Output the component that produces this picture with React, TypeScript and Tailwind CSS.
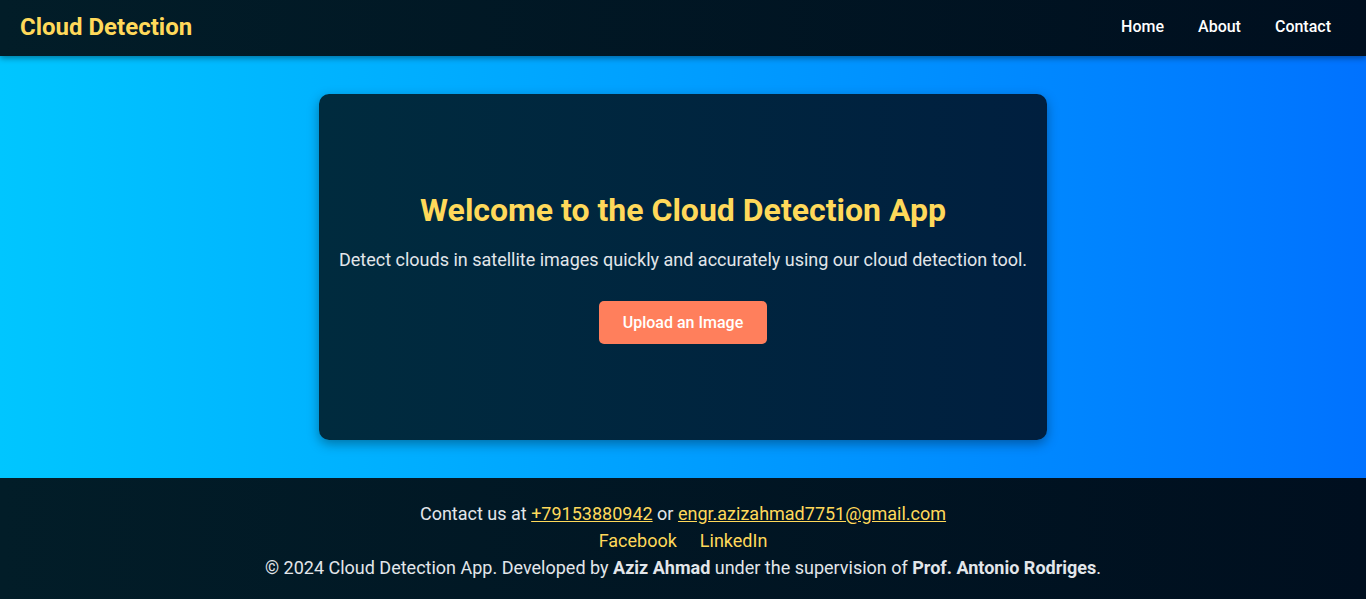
export default function App() {
  return (
    <div className="min-h-screen flex flex-col font-['Roboto',sans-serif]">
      <header className="h-[56px] flex items-center justify-between pl-[20px] pr-[35px] pb-[2px] bg-gradient-to-r from-[#021d28] to-[#000f1f] shadow-[0_2px_6px_rgba(0,0,0,0.4)] z-10">
        <h1 className="text-[24px] font-bold text-[#ffd95a]">Cloud Detection</h1>
        <nav className="flex gap-[34px] text-[16px] font-medium text-white">
          <a href="#">Home</a>
          <a href="#">About</a>
          <a href="#">Contact</a>
        </nav>
      </header>

      <main className="h-[422px] flex items-center justify-center bg-gradient-to-r from-[#00c6ff] to-[#0072ff]">
        <section className="w-[728px] h-[346px] rounded-[10px] px-[10px] flex flex-col items-center justify-center text-center bg-gradient-to-r from-[#002b3e] to-[#001f3f] shadow-[0_4px_12px_rgba(0,0,0,0.35)]">
          <h2 className="text-[32px] leading-[40px] font-bold text-[#ffd95a]">
            Welcome to the Cloud Detection App
          </h2>
          <p className="mt-[16px] text-[18px] leading-[27px] text-[#e2e6ea]">
            Detect clouds in satellite images quickly and accurately using our cloud detection tool.
          </p>
          <button className="mt-[28px] w-[168px] h-[43px] rounded-[5px] bg-[#ff7f5c] text-white text-[16px] font-medium">
            Upload an Image
          </button>
        </section>
      </main>

      <footer className="flex-1 min-h-[121px] pt-[4px] flex flex-col items-center justify-center text-[18px] leading-[27px] text-[#e2e6ea] bg-gradient-to-r from-[#021d28] to-[#000f1f]">
        <p>
          Contact us at{' '}
          <a href="#" className="underline text-[#ffd95a]">+79153880942</a> or{' '}
          <a href="#" className="underline text-[#ffd95a]">engr.azizahmad7751@gmail.com</a>
        </p>
        <p className="flex gap-[23px] text-[#ffd95a]">
          <a href="#">Facebook</a>
          <a href="#">LinkedIn</a>
        </p>
        <p>
          © 2024 Cloud Detection App. Developed by <strong>Aziz Ahmad</strong> under the supervision of{' '}
          <strong>Prof. Antonio Rodriges</strong>.
        </p>
      </footer>
    </div>
  );
}
